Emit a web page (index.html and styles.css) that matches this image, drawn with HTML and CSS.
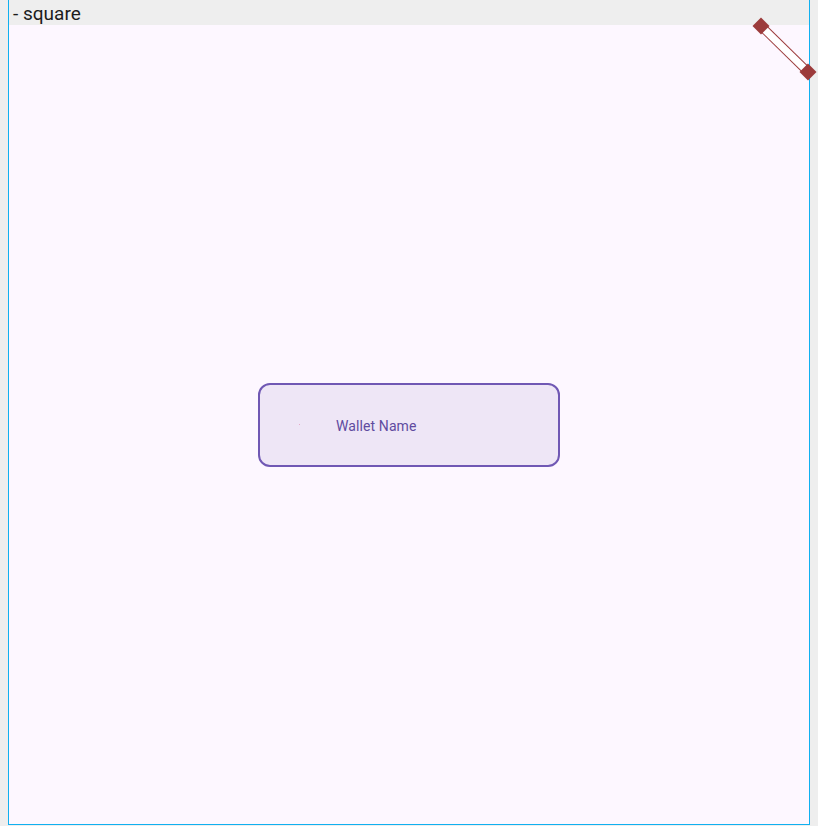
FILE: index.html
```html
<!DOCTYPE html>
<html>
<head>
<meta charset="utf-8">
<link rel="stylesheet" href="styles.css">
</head>
<body>
<div class="frame">
  <div class="header">- square</div>
  <div class="content">
    <div class="card">
      <span class="icon"><span class="dot"></span></span>
      <span class="label">Wallet Name</span>
    </div>
  </div>
</div>
<svg class="handle" width="68" height="70" viewBox="0 0 68 70">
  <line x1="11" y1="12" x2="58" y2="58" stroke="#9c3b3b" stroke-width="9"/>
  <line x1="11" y1="12" x2="58" y2="58" stroke="#ffffff" stroke-width="7"/>
  <rect x="5" y="6" width="12" height="12" fill="#9c3b3b" transform="rotate(45 11 12)"/>
  <rect x="52" y="52" width="12" height="12" fill="#9c3b3b" transform="rotate(45 58 58)"/>
</svg>
</body>
</html>
```
FILE: styles.css
```css
html, body {
  margin: 0;
  padding: 0;
  background: #eeeeee;
  width: 818px;
  height: 826px;
  overflow: hidden;
}
.frame {
  margin-left: 8px;
  width: 800px;
  height: 824px;
  border-left: 1px solid #10b0f0;
  border-right: 1px solid #10b0f0;
  border-bottom: 1px solid #10b0f0;
  display: flex;
  flex-direction: column;
}
.header {
  height: 25px;
  flex: none;
  background: #eeeeee;
  font-family: Roboto, "Liberation Sans", sans-serif;
  font-size: 19px;
  line-height: 27px;
  color: #1c1c1c;
  padding-left: 4px;
  overflow: hidden;
}
.content {
  flex: 1;
  background: #fdf7ff;
  display: flex;
  align-items: center;
  justify-content: center;
}
.card {
  width: 302px;
  height: 84px;
  box-sizing: border-box;
  border: 2px solid #7058b4;
  border-radius: 12px;
  background: #eee6f6;
  display: flex;
  align-items: center;
  padding-left: 28px;
  gap: 24px;
  position: relative;
  top: 0.5px;
}
.icon {
  width: 24px;
  height: 24px;
  position: relative;
}
.dot {
  position: absolute;
  left: 11px;
  top: 11px;
  width: 1px;
  height: 1px;
  background: #e8a8c8;
}
.label {
  font-family: Roboto, "Liberation Sans", sans-serif;
  font-size: 14px;
  color: #5f4ba0;
  letter-spacing: 0.1px;
  margin-top: 1px;
}
.handle {
  position: absolute;
  left: 750px;
  top: 14px;
}
```
